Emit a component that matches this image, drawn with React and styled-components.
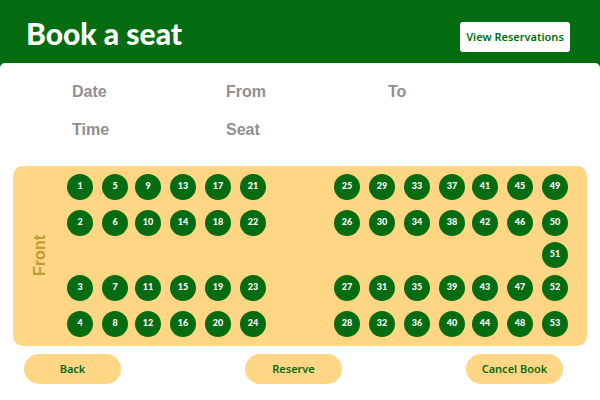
import React, { useState } from "react";
import styled, { createGlobalStyle } from "styled-components";

const GREEN = "#056c11";
const SAND = "#fed684";

const GlobalStyle = createGlobalStyle`
  *, *::before, *::after { box-sizing: border-box; }
  body { margin: 0; background: ${GREEN}; }
`;

const Page = styled.div`
  display: flex;
  flex-direction: column;
  min-height: 100vh;
  background: ${GREEN};
`;

const Header = styled.header`
  display: flex;
  align-items: flex-end;
  justify-content: space-between;
  padding: 14px 30px 11px 26px;
`;

const Title = styled.h1`
  margin: 0;
  color: #fff;
  font: 900 30px/38px Lato, sans-serif;
`;

const HeaderButton = styled.button`
  width: 110px;
  height: 30px;
  padding: 0;
  border: 0;
  border-radius: 3px;
  background: #fff;
  color: ${GREEN};
  font: 600 11px/16px "Noto Sans", sans-serif;
  white-space: nowrap;
  cursor: pointer;
`;

const Sheet = styled.main`
  flex: 1;
  padding: 19px 13px 15px;
  border-radius: 5px 5px 0 0;
  background: #fff;
`;

const Details = styled.section`
  display: grid;
  grid-template-columns: 154fr 162fr 199fr;
  row-gap: 18px;
  padding-left: 59px;
`;

const Detail = styled.span`
  color: #8f8f8f;
  font: 700 16px/20px "Liberation Sans", sans-serif;
`;

const Coach = styled.section`
  display: flex;
  align-items: center;
  margin-top: 26px;
  padding: 8px 19px 9px 18px;
  border-radius: 10px;
  background: ${SAND};
`;

const FrontLabel = styled.span`
  width: 18px;
  margin-right: 18px;
  color: #c49a38;
  font: 700 16px/18px "Liberation Sans", sans-serif;
  writing-mode: vertical-rl;
  transform: rotate(180deg);
`;

const Seats = styled.div`
  flex: 1;
  display: grid;
  grid-template-columns: 35px 33px 35px 35px 35px 26px 1fr 35px 35px 35px 33px 35px 35px 26px;
  grid-template-rows: 36px 32px 33px 36px 26px;
`;

const Seat = styled.button`
  grid-column: ${(p) => p.$col};
  grid-row: ${(p) => p.$row};
  width: 26px;
  height: 26px;
  padding: 0 0 3px;
  border: 0;
  border-radius: 50%;
  background: ${GREEN};
  color: #fff;
  font: 900 9px/13px Lato, sans-serif;
  cursor: pointer;

  &[aria-pressed="true"] { background: #c49a38; }
`;

const Actions = styled.footer`
  display: flex;
  justify-content: space-between;
  margin-top: 8px;
  padding: 0 24px 0 11px;
`;

const ActionButton = styled.button`
  width: 97px;
  height: 30px;
  padding: 0;
  border: 0;
  border-radius: 15px;
  background: ${SAND};
  color: ${GREEN};
  font: 600 11px/16px "Noto Sans", sans-serif;
  cursor: pointer;
`;

const details = ["Date", "From", "To", "Time", "Seat"];
const actions = ["Back", "Reserve", "Cancel Book"];
const seatRows = [1, 2, 4, 5];

const seats = [];
for (let n = 1; n <= 48; n += 1) {
  const block = Math.floor((n - 1) / 4);
  seats.push({ n, col: block < 6 ? block + 1 : block + 2, row: seatRows[(n - 1) % 4] });
}
for (let row = 1; row <= 5; row += 1) {
  seats.push({ n: 48 + row, col: 14, row });
}

export default function App() {
  const [selected, setSelected] = useState(null);

  return (
    <Page>
      <GlobalStyle />
      <Header>
        <Title>Book a seat</Title>
        <HeaderButton type="button">View Reservations</HeaderButton>
      </Header>
      <Sheet>
        <Details>
          {details.map((name) => (
            <Detail key={name}>{name}</Detail>
          ))}
        </Details>
        <Coach>
          <FrontLabel>Front</FrontLabel>
          <Seats>
            {seats.map(({ n, col, row }) => (
              <Seat
                key={n}
                type="button"
                $col={col}
                $row={row}
                aria-pressed={selected === n}
                onClick={() => setSelected(n)}
              >
                {n}
              </Seat>
            ))}
          </Seats>
        </Coach>
        <Actions>
          {actions.map((name) => (
            <ActionButton key={name} type="button">{name}</ActionButton>
          ))}
        </Actions>
      </Sheet>
    </Page>
  );
}
